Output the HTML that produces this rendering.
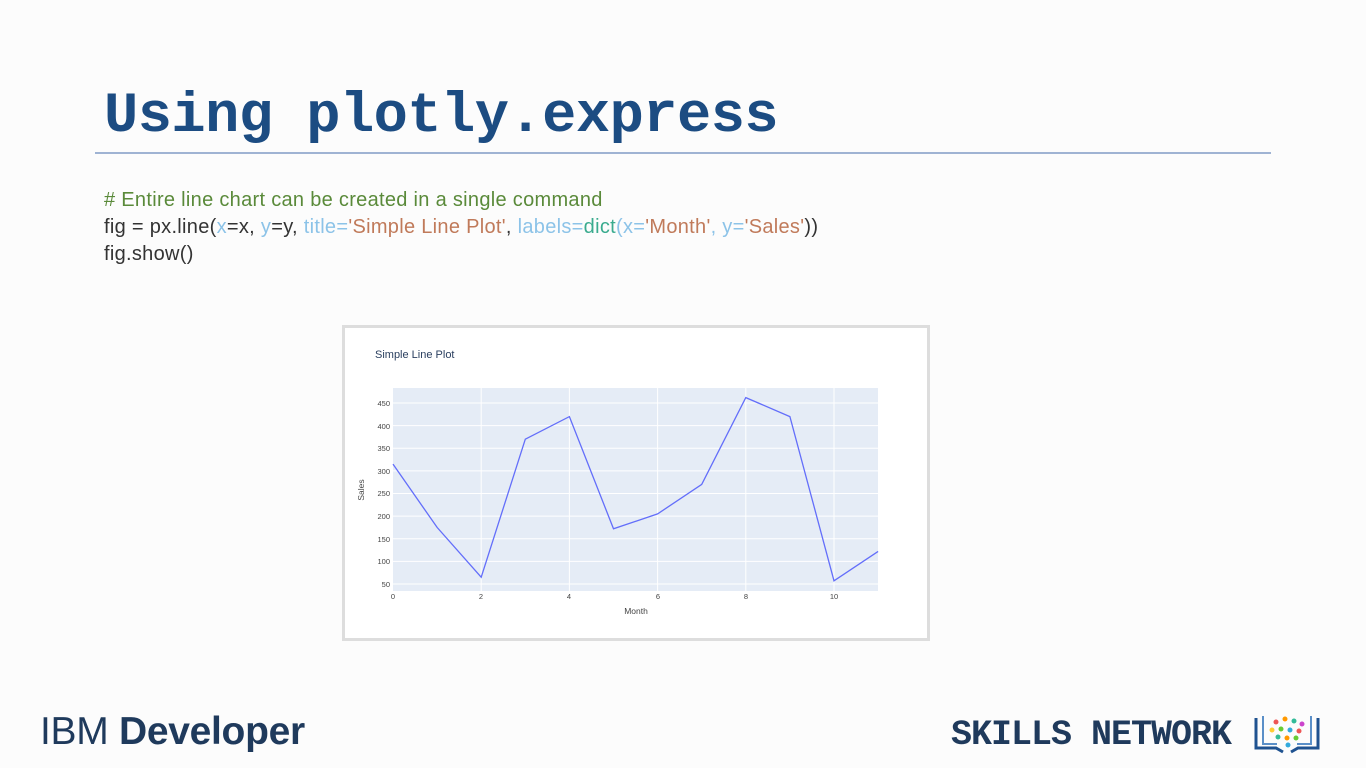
<!DOCTYPE html>
<html><head><meta charset="utf-8"><style>
*{margin:0;padding:0;box-sizing:border-box}
body{width:1366px;height:768px;background:#fcfcfc;position:relative;overflow:hidden;font-family:"Liberation Sans",sans-serif}
.t{position:absolute;left:104px;top:85px;font-family:"Liberation Mono",monospace;font-weight:bold;font-size:57px;color:#1c4c82;letter-spacing:-0.5px}
.hr{position:absolute;left:95px;top:152px;width:1176px;height:2px;background:#9fb3d3}
.code{position:absolute;left:104px;top:187px;font-size:20px;letter-spacing:0.3px;line-height:27px;color:#333;white-space:pre}
.c{color:#5a8a3a}.b{color:#8cc3e8}.s{color:#c07a5a}.g{color:#3aab8e}
.ibm{position:absolute;left:40px;top:710px;font-size:39px;color:#1f3a5c;letter-spacing:-0.3px}
.sn{position:absolute;left:951px;top:715px;font-family:"Liberation Mono",monospace;font-weight:bold;font-size:35px;color:#1f3a5c;letter-spacing:-1px}
</style></head><body>
<div class="t">Using plotly.express</div>
<div class="hr"></div>
<div class="code"><span class="c"># Entire line chart can be created in a single command</span>
fig = px.line(<span class="b">x</span>=x, <span class="b">y</span>=y, <span class="b">title=</span><span class="s">'Simple Line Plot'</span>, <span class="b">labels=</span><span class="g">dict</span><span class="b">(x=</span><span class="s">'Month'</span><span class="b">, y=</span><span class="s">'Sales'</span>))
fig.show()</div>
<svg style="position:absolute;left:0;top:0" width="1366" height="768">
<rect x="343.5" y="326.5" width="585" height="313" fill="#fff" stroke="#ddd" stroke-width="3"/>
<text x="375" y="358" font-size="11" fill="#2a3f5f" font-family="Liberation Sans">Simple Line Plot</text>
<rect x="393" y="388" width="485" height="203" fill="#e5ecf6"/>
<g stroke="#fff" stroke-width="1">
<line x1="393" y1="584" x2="878" y2="584"/><line x1="393" y1="561.4" x2="878" y2="561.4"/><line x1="393" y1="538.8" x2="878" y2="538.8"/><line x1="393" y1="516.1" x2="878" y2="516.1"/><line x1="393" y1="493.5" x2="878" y2="493.5"/><line x1="393" y1="470.9" x2="878" y2="470.9"/><line x1="393" y1="448.3" x2="878" y2="448.3"/><line x1="393" y1="425.6" x2="878" y2="425.6"/><line x1="393" y1="403" x2="878" y2="403"/>
<line x1="481.2" y1="388" x2="481.2" y2="591"/><line x1="569.4" y1="388" x2="569.4" y2="591"/><line x1="657.6" y1="388" x2="657.6" y2="591"/><line x1="745.8" y1="388" x2="745.8" y2="591"/><line x1="834" y1="388" x2="834" y2="591"/>
</g>
<polyline fill="none" stroke="#636efa" stroke-width="1.3" points="393,464.1 437.1,527.4 481.2,577.2 525.3,439.2 569.4,416.6 613.5,528.8 657.6,513.9 701.7,484.4 745.8,397.6 789.9,416.6 834,580.8 878.1,551.4"/>
<g font-size="7.5" fill="#444" font-family="Liberation Sans" text-anchor="end">
<text x="390" y="587">50</text><text x="390" y="564">100</text><text x="390" y="542">150</text><text x="390" y="519">200</text><text x="390" y="496">250</text><text x="390" y="474">300</text><text x="390" y="451">350</text><text x="390" y="429">400</text><text x="390" y="406">450</text>
</g>
<g font-size="7.5" fill="#444" font-family="Liberation Sans" text-anchor="middle">
<text x="393" y="599">0</text><text x="481" y="599">2</text><text x="569" y="599">4</text><text x="658" y="599">6</text><text x="746" y="599">8</text><text x="834" y="599">10</text>
<text x="636" y="614" font-size="8.5">Month</text>
<text transform="translate(364,490) rotate(-90)" font-size="8.5">Sales</text>
</g>
<g fill="none" stroke="#1f5290" stroke-width="3">
<path d="M1256 718 v30 h20 l7 4"/><path d="M1318 718 v30 h-20 l-7 4"/>
<path d="M1263 716 v28 h14" stroke="#5a8fc8" stroke-width="2"/><path d="M1311 716 v28 h-14" stroke="#5a8fc8" stroke-width="2"/>
</g>
<g>
<circle cx="1276" cy="722" r="2.5" fill="#e55"/><circle cx="1285" cy="719" r="2.5" fill="#f90"/><circle cx="1294" cy="721" r="2.5" fill="#3b9"/><circle cx="1302" cy="724" r="2.5" fill="#c4c"/>
<circle cx="1272" cy="730" r="2.5" fill="#fc3"/><circle cx="1281" cy="729" r="2.5" fill="#6c3"/><circle cx="1290" cy="730" r="2.5" fill="#3ad"/><circle cx="1299" cy="731" r="2.5" fill="#e55"/>
<circle cx="1278" cy="737" r="2.5" fill="#3b9"/><circle cx="1287" cy="738" r="2.5" fill="#f90"/><circle cx="1296" cy="738" r="2.5" fill="#6c3"/><circle cx="1288" cy="745" r="2.5" fill="#3ad"/>
</g>
</svg>
<div class="ibm">IBM <b>Developer</b></div>
<div class="sn">SKILLS NETWORK</div>
</body></html>
